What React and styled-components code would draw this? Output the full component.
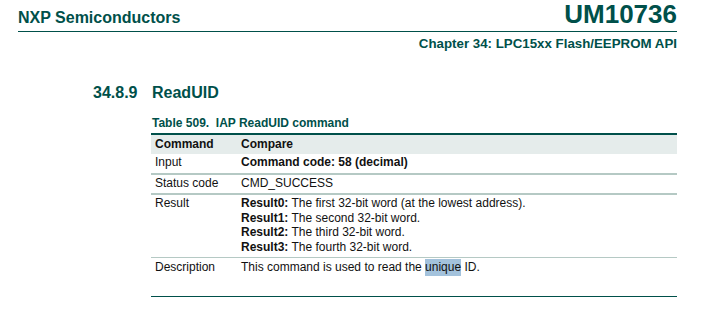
import React from "react";
import styled, { createGlobalStyle } from "styled-components";

const GREEN = "#00504a";

const Global = createGlobalStyle`
  html, body { margin: 0; padding: 0; background: #fff; }
  body { font-family: "Liberation Sans", Arial, sans-serif; color: #111; }
`;

const Page = styled.div`
  width: 708px;
  height: 312px;
  padding: 0 31px 0 18px;
  box-sizing: border-box;
`;

const TopBar = styled.header`
  height: 32px;
  box-sizing: border-box;
  padding-bottom: 4px;
  display: flex;
  justify-content: space-between;
  align-items: flex-end;
  border-bottom: 1px solid ${GREEN};
`;

const Company = styled.div`
  font-size: 16px;
  line-height: 18px;
  font-weight: bold;
  color: ${GREEN};
`;

const DocId = styled.div`
  font-size: 26px;
  line-height: 28px;
  margin-bottom: -1px;
  font-weight: bold;
  color: ${GREEN};
`;

const Chapter = styled.div`
  margin-top: 4px;
  text-align: right;
  font-size: 13.3px;
  line-height: 15px;
  font-weight: bold;
  color: ${GREEN};
`;

const Section = styled.section`
  margin-left: 75px;
  margin-top: 33px;
`;

const Heading = styled.h2`
  margin: 0;
  display: grid;
  grid-template-columns: 59px 1fr;
  font-size: 16px;
  line-height: 18px;
  font-weight: bold;
  color: ${GREEN};
`;

const Body = styled.div`
  margin-left: 58px;
  margin-top: 14px;
`;

const Caption = styled.div`
  padding-left: 1px;
  font-size: 12px;
  line-height: 14.6px;
  font-weight: bold;
  color: ${GREEN};
  margin-bottom: 2px;
`;

const Table = styled.div`
  width: 526px;
  border-top: 2px solid ${GREEN};
  border-bottom: 1px solid ${GREEN};
  font-size: 12px;
  line-height: 14.6px;
`;

const Row = styled.div`
  display: grid;
  grid-template-columns: 86px 1fr;
  height: ${(p) => p.$h}px;
  box-sizing: border-box;
  padding-top: ${(p) => p.$pt || 0}px;
  background: ${(p) => (p.$head ? "#e5eceb" : "#fff")};
  border-bottom: ${(p) => (p.$line ? `${p.$line}px solid #b5c9c4` : "none")};
  font-weight: ${(p) => (p.$head ? "bold" : "normal")};
`;

const Cell = styled.div`
  padding: 0 4px;
  color: #111;
`;

const Line = styled.div``;

const Mark = styled.span`
  background: #a3c2dc;
  padding: 1px 0 2px;
`;

export default function App() {
  return (
    <>
      <Global />
      <Page>
        <TopBar>
          <Company>NXP Semiconductors</Company>
          <DocId>UM10736</DocId>
        </TopBar>
        <Chapter>Chapter 34: LPC15xx Flash/EEPROM API</Chapter>
        <Section>
          <Heading>
            <span>34.8.9</span>
            <span>ReadUID</span>
          </Heading>
          <Body>
            <Caption>Table 509.&nbsp; IAP ReadUID command</Caption>
            <Table>
              <Row $head $h={19} $pt={2.5}>
                <Cell>Command</Cell>
                <Cell>Compare</Cell>
              </Row>
              <Row $h={21} $line={2} $pt={1.5}>
                <Cell>Input</Cell>
                <Cell>
                  <b>Command code: 58 (decimal)</b>
                </Cell>
              </Row>
              <Row $h={20} $line={2} $pt={1.5}>
                <Cell>Status code</Cell>
                <Cell>CMD_SUCCESS</Cell>
              </Row>
              <Row $h={63} $line={1} $pt={1.5}>
                <Cell>Result</Cell>
                <Cell>
                  <Line>
                    <b>Result0:</b> The first 32-bit word (at the lowest address).
                  </Line>
                  <Line>
                    <b>Result1:</b> The second 32-bit word.
                  </Line>
                  <Line>
                    <b>Result2:</b> The third 32-bit word.
                  </Line>
                  <Line>
                    <b>Result3:</b> The fourth 32-bit word.
                  </Line>
                </Cell>
              </Row>
              <Row $h={38} $pt={2}>
                <Cell>Description</Cell>
                <Cell>
                  This command is used to read the <Mark>unique</Mark> ID.
                </Cell>
              </Row>
            </Table>
          </Body>
        </Section>
      </Page>
    </>
  );
}
